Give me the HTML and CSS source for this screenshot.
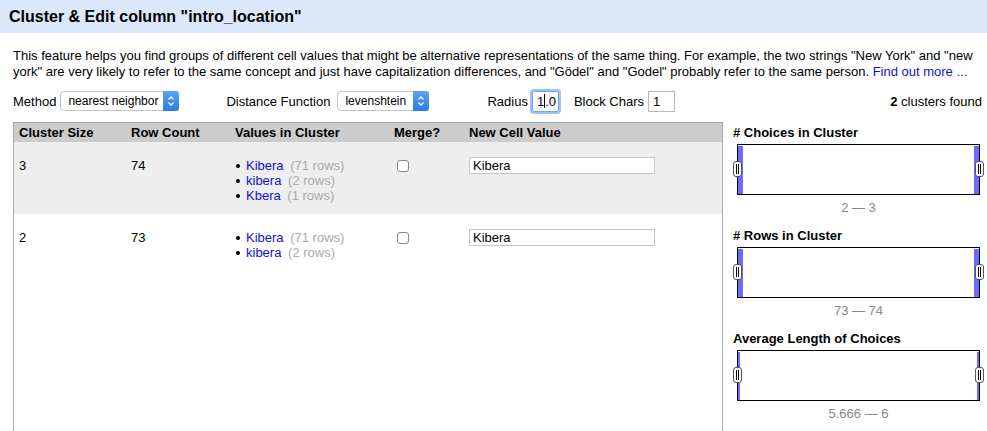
FILE: index.html
```html
<!DOCTYPE html>
<html>
<head>
<meta charset="utf-8">
<link rel="stylesheet" href="styles.css">
</head>
<body>
<div class="page">
  <div class="header">Cluster &amp; Edit column "intro_location"</div>
  <div class="content">
    <p class="desc">This feature helps you find groups of different cell values that might be alternative representations of the same thing. For example, the two strings "New York" and "new york" are very likely to refer to the same concept and just have capitalization differences, and "Gödel" and "Godel" probably refer to the same person. <a href="#" class="link">Find out more ...</a></p>
    <div class="controls">
      <span class="lbl">Method</span>
      <div class="select sel-method"><span class="sel-text">nearest neighbor</span><span class="sel-btn"><svg width="8" height="12" viewBox="0 0 8 12"><path d="M1.5 4.5 L4 2 L6.5 4.5 M1.5 7.5 L4 10 L6.5 7.5" fill="none" stroke="#fff" stroke-width="1.3"/></svg></span></div>
      <span class="lbl lbl-dist">Distance Function</span>
      <div class="select sel-dist"><span class="sel-text">levenshtein</span><span class="sel-btn"><svg width="8" height="12" viewBox="0 0 8 12"><path d="M1.5 4.5 L4 2 L6.5 4.5 M1.5 7.5 L4 10 L6.5 7.5" fill="none" stroke="#fff" stroke-width="1.3"/></svg></span></div>
      <span class="lbl lbl-radius">Radius</span>
      <div class="tinput focus">1<span class="caret"></span>.0</div>
      <span class="lbl lbl-block">Block Chars</span>
      <div class="tinput">1</div>
      <span class="found"><b>2</b> clusters found</span>
    </div>
    <div class="main">
      <div class="left">
        <table class="clusters">
          <colgroup><col class="c1"><col class="c2"><col class="c3"><col class="c4"><col class="c5"></colgroup>
          <thead>
            <tr><th>Cluster Size</th><th>Row Count</th><th>Values in Cluster</th><th>Merge?</th><th>New Cell Value</th></tr>
          </thead>
          <tbody>
            <tr class="odd">
              <td>3</td><td>74</td>
              <td><ul class="vals"><li><a href="#">Kibera</a> <span class="cnt">(71 rows)</span></li><li><a href="#">kibera</a> <span class="cnt">(2 rows)</span></li><li><a href="#">Kbera</a> <span class="cnt">(1 rows)</span></li></ul></td>
              <td><span class="cb"></span></td>
              <td><div class="cell-input">Kibera</div></td>
            </tr>
            <tr>
              <td>2</td><td>73</td>
              <td><ul class="vals"><li><a href="#">Kibera</a> <span class="cnt">(71 rows)</span></li><li><a href="#">kibera</a> <span class="cnt">(2 rows)</span></li></ul></td>
              <td><span class="cb"></span></td>
              <td><div class="cell-input">Kibera</div></td>
            </tr>
          </tbody>
        </table>
      </div>
      <div class="right">
        <div class="facet">
          <div class="facet-title"># Choices in Cluster</div>
          <div class="hist"><span class="bar bar-l"></span><span class="bar bar-r"></span><span class="handle h-l"></span><span class="handle h-r"></span></div>
          <div class="range">2 — 3</div>
        </div>
        <div class="facet">
          <div class="facet-title"># Rows in Cluster</div>
          <div class="hist"><span class="bar bar-l"></span><span class="bar bar-r"></span><span class="handle h-l"></span><span class="handle h-r"></span></div>
          <div class="range">73 — 74</div>
        </div>
        <div class="facet">
          <div class="facet-title">Average Length of Choices</div>
          <div class="hist thin"><span class="bar bar-l"></span><span class="bar bar-r"></span><span class="handle h-l"></span><span class="handle h-r"></span></div>
          <div class="range">5.666 — 6</div>
        </div>
      </div>
    </div>
  </div>
</div>
</body>
</html>
```
FILE: styles.css
```css
html, body {
  margin: 0;
  padding: 0;
  background: #fff;
}
body {
  font-family: "Liberation Sans", Arial, sans-serif;
  font-size: 13px;
  color: #000;
}
.page {
  height: 431px;
  overflow: hidden;
  display: flex;
  flex-direction: column;
}
.header {
  background: #dbe7fb;
  height: 33px;
  line-height: 33px;
  padding-left: 9px;
  font-size: 16px;
  font-weight: bold;
  flex: none;
}
.content {
  padding: 15px 5px 0 13px;
  display: flex;
  flex-direction: column;
  flex: 1;
  min-height: 0;
}
.desc {
  margin: 0;
  line-height: 16px;
}
.link, .vals a {
  color: #1111cc;
  text-decoration: none;
}
.controls {
  display: flex;
  align-items: center;
  height: 22px;
  margin-top: 10px;
}
.lbl {
  white-space: nowrap;
}
.select {
  display: flex;
  align-items: stretch;
  height: 18px;
  border: 1px solid #c4c4c4;
  border-radius: 4px;
  margin-left: 4px;
  font-size: 12px;
  box-sizing: content-box;
  background: #fff;
}
.sel-text {
  flex: 1;
  padding-left: 7px;
  line-height: 18px;
}
.sel-btn {
  width: 16px;
  background: linear-gradient(#5aa3f8, #2b7be8);
  border-radius: 0 3px 3px 0;
  display: flex;
  align-items: center;
  justify-content: center;
  margin: -1px -1px -1px 0;
}
.sel-method { width: 117px; }
.sel-dist { width: 90px; }
.lbl-dist { margin-left: 47px; }
.sel-dist { margin-left: 7px; }
.lbl-radius { margin-left: 58px; }
.lbl-block { margin-left: 15px; }
.tinput {
  height: 19px;
  line-height: 19px;
  border: 1px solid #b8b8b8;
  padding-left: 4px;
  margin-left: 4px;
  width: 21px;
  font-size: 13px;
  box-sizing: content-box;
}
.tinput.focus {
  border-color: #6ca6e8;
  box-shadow: 0 0 0 2px #9cc3f5;
  border-radius: 2px;
  width: 21px;
}
.caret {
  display: inline-block;
  width: 1px;
  height: 14px;
  background: #000;
  vertical-align: -2px;
}
.found {
  margin-left: auto;
}
.main {
  display: flex;
  margin-top: 10px;
  flex: 1;
  min-height: 0;
}
.left {
  width: 708px;
  border: 1px solid #aaa;
  border-bottom: none;
  flex: none;
}
.clusters {
  width: 100%;
  border-collapse: collapse;
  table-layout: fixed;
}
.c1 { width: 112px; }
.c2 { width: 104px; }
.c3 { width: 159px; }
.c4 { width: 75px; }
.clusters th {
  background: #cccccc;
  text-align: left;
  height: 19px;
  padding: 0 0 0 5px;
  font-weight: bold;
  line-height: 19px;
}
.clusters td {
  vertical-align: top;
  padding: 16px 0 11px 5px;
  line-height: 15px;
}
.clusters tr.odd td {
  background: #eeeeee;
}
.vals {
  margin: 0;
  padding: 0 0 0 11px;
  list-style: none;
}
.vals li {
  position: relative;
}
.vals li::before {
  content: "";
  position: absolute;
  left: -10px;
  top: 6px;
  width: 4px;
  height: 4px;
  border-radius: 50%;
  background: #000;
}
.cnt {
  color: #aaa;
  margin-left: 3px;
}
.cb {
  display: block;
  width: 10px;
  height: 10px;
  border: 1px solid #888;
  border-radius: 3px;
  background: #fff;
  margin: 2px 0 0 3px;
}
.cell-input {
  width: 181px;
  height: 15px;
  line-height: 15px;
  border: 1px solid #c6c6c6;
  padding-left: 3px;
  font-size: 13px;
  margin-top: -1px;
  background: #fff;
}
.right {
  margin-left: 10px;
  flex: 1;
  padding-top: 3px;
}
.facet-title {
  font-weight: bold;
  line-height: 16px;
  height: 16px;
}
.hist {
  position: relative;
  margin: 3px 0 0 4px;
  width: 241px;
  height: 49px;
  border: 1px solid #000;
  background: #fff;
}
.bar {
  position: absolute;
  top: 1px;
  bottom: 0;
  width: 5px;
  background: #6b6bff;
}
.bar-l { left: 0; }
.bar-r { right: 0; }
.thin .bar { width: 2px; }
.handle {
  position: absolute;
  top: 16px;
  width: 7px;
  height: 14px;
  border: 1px solid #555;
  border-radius: 3px;
  background: #fff;
}
.handle::before {
  content: "";
  position: absolute;
  left: 2px;
  top: 2px;
  width: 1px;
  height: 10px;
  background: #000;
  box-shadow: 2px 0 0 #000;
}
.h-l { left: -5px; }
.h-r { right: -5px; }
.range {
  text-align: center;
  color: #888;
  line-height: 16px;
  margin: 5px 0 12px 4px;
  width: 243px;
}
```
